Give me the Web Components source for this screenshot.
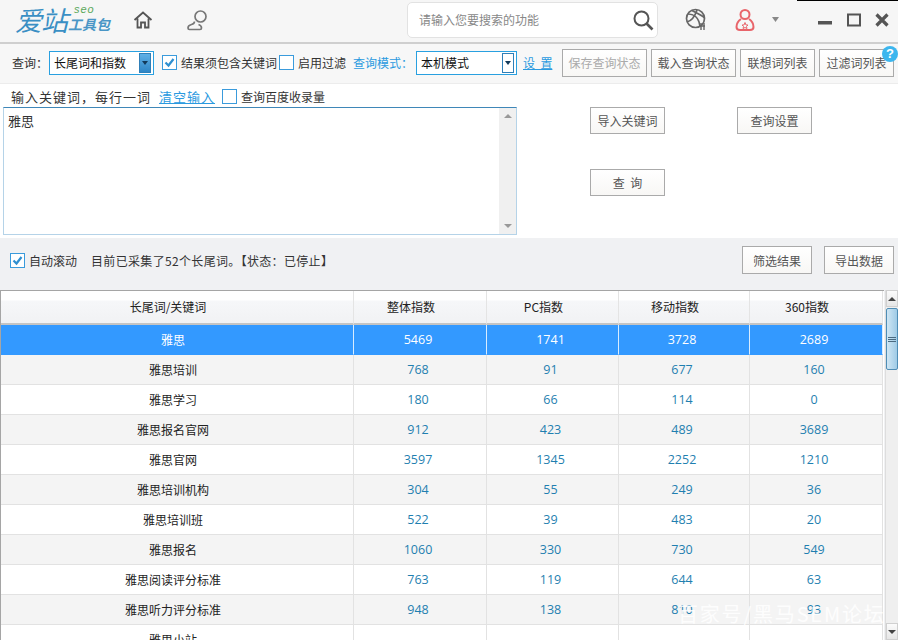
<!DOCTYPE html>
<html lang="zh">
<head>
<meta charset="utf-8">
<title>爱站工具包</title>
<style>
  html, body { margin: 0; height: 640px; overflow: hidden; background: #fff; }
  body { font: 12px "Noto Sans CJK SC", "Liberation Sans", sans-serif; color: #333; }
</style>
</head>
<body>
<az-app></az-app>
<script>
const SANS = '"Noto Sans CJK SC", "Liberation Sans", sans-serif';

class AzButton extends HTMLElement {
    constructor() {
        super();
        this.attachShadow({mode: 'open'}).innerHTML = `
            <style>
                :host {
                    display: flex; align-items: center; justify-content: center;
                    box-sizing: border-box; height: 28px; flex: none;
                    border: 1px solid #aaa; font-size: 12px; color: #555;
                    background: linear-gradient(#fff, #f8f7f5); white-space: nowrap;
                }
                :host([disabled]) { color: #aaa; }
            </style>
            <slot></slot>`;
    }
}
customElements.define('az-button', AzButton);

class AzCheck extends HTMLElement {
    constructor() {
        super();
        const on = this.hasAttribute('checked');
        this.attachShadow({mode: 'open'}).innerHTML = `
            <style>
                :host { display: flex; align-items: center; gap: 4px; flex: none; white-space: nowrap; }
                .box { box-sizing: border-box; width: 15px; height: 15px; border: 1px solid #3a9bdc; background: #fff; display: flex; }
                svg { width: 13px; height: 13px; }
            </style>
            <span class="box">${on ? '<svg viewBox="0 0 13 13"><path d="M2.5 6.5 5.5 9.5 10.5 3" fill="none" stroke="#2f8fd0" stroke-width="2.2"/></svg>' : ''}</span>
            <slot></slot>`;
    }
}
customElements.define('az-check', AzCheck);

class AzSelect extends HTMLElement {
    constructor() {
        super();
        const strong = this.hasAttribute('strong');
        this.attachShadow({mode: 'open'}).innerHTML = `
            <style>
                :host {
                    display: flex; align-items: center; justify-content: space-between;
                    box-sizing: border-box; height: 24px; flex: none; padding: 0 2px 0 4px;
                    border: 1px solid #29a0e0; background: #fff; color: #111; font-size: 12px;
                }
                .arrow {
                    box-sizing: border-box; width: 12px; height: 20px;
                    display: flex; align-items: center; justify-content: center;
                    border: 1px solid #2f7fb8;
                    background: ${strong ? 'linear-gradient(#5fb0e6, #2f86c6)' : '#fff'};
                }
                .arrow i { width: 0; height: 0; border: 3px solid transparent; border-top: 4px solid #123a5a; border-bottom: 0; }
            </style>
            <slot></slot><span class="arrow"><i></i></span>`;
    }
}
customElements.define('az-select', AzSelect);

class AzTitlebar extends HTMLElement {
    constructor() {
        super();
        this.attachShadow({mode: 'open'}).innerHTML = `
            <style>
                :host {
                    display: flex; align-items: center; box-sizing: border-box; height: 44px; padding-bottom: 3px;
                    background: #f6f6f6; border-bottom: 2px solid #cfcfcf; position: relative;
                }
                .sliver { position: absolute; right: 0; top: 0; width: 101px; height: 1px; background: #000; }
                .logo { box-sizing: border-box; width: 125px; flex: none; padding-left: 15px; display: flex; align-items: center; height: 36px; }
                .big { font: italic 27px/34px ${SANS}; color: #3a8fc4; letter-spacing: -1px; }
                .sub { display: flex; flex-direction: column; margin: -3px 0 0 1px; }
                .seo { font: italic 11px/11px "Liberation Sans", sans-serif; color: #5aa85a; margin: 0 0 1px 6px; letter-spacing: 1px; }
                .tool { font: italic bold 14px/16px ${SANS}; color: #4a96c6; white-space: nowrap; }
                svg { display: block; flex: none; }
                .search {
                    box-sizing: border-box; width: 251px; height: 36px; margin-left: 199px;
                    display: flex; align-items: center; justify-content: space-between; padding: 0 3px 0 11px;
                    background: #fff; border: 1px solid #e2e2e2; border-radius: 5px; color: #888; font-size: 12px;
                }
            </style>
            <span class="sliver"></span>
            <div class="logo">
                <span class="big">爱站</span>
                <span class="sub"><span class="seo">seo</span><span class="tool">工具包</span></span>
            </div>
            <svg style="margin-left:8px" width="20" height="20" viewBox="0 0 20 20" fill="none" stroke="#555" stroke-width="1.8"><path d="M1.5 10 10 2.5 18.500 10M4.500 8.500V17.500H8V12.500H12V17.500H15.500V8.500"/></svg>
            <svg style="margin-left:33px" width="22" height="22" viewBox="0 0 22 22" fill="none" stroke="#777" stroke-width="1.7"><circle cx="14.500" cy="7.500" r="5.500"/><path d="M8.500 12.500C8.500 14 7.500 15 5.500 15.500 3.500 16 2 17 2 19 2 20 2.500 20.500 3.500 20.500H14C15 20.500 15.500 20 15.500 19 15.500 17 14 16 12.500 15.500"/></svg>
            <div class="search"><span>请输入您要搜索的功能</span>
                <svg width="22" height="22" viewBox="0 0 22 22" fill="none" stroke="#555" stroke-width="2"><circle cx="9.500" cy="9.500" r="7"/><path d="M14.500 14.500 20.500 20.500" stroke-width="2.600"/></svg>
            </div>
            <svg style="margin-left:27px" width="22" height="24" viewBox="0 0 22 24" fill="none" stroke="#666" stroke-width="1.700"><circle cx="10.500" cy="10.500" r="9"/><path d="M3 6C8 6 14 9 15 19M12 2C10 8 6 13 2 14M7 2.500C11 5 17 7 19.500 10"/><path d="M16 15V22M19 15V22M15 18H20" stroke-width="1.400"/></svg>
            <svg style="margin-left:28px" width="20" height="24" viewBox="0 0 20 24" fill="none" stroke="#e8646a" stroke-width="2"><circle cx="10" cy="6.500" r="4.500"/><path d="M6 11C3 13 1.500 16 1.500 19 1.500 21 3 22 5 22H15C17 22 18.500 21 18.500 19 18.500 16 17 13 14 11"/><path d="M10 14.500 11 17H13L11.500 18.500 12 20.500 10 19.500 8 20.500 8.500 18.500 7 17H9Z" stroke-width="1"/></svg>
            <svg style="margin-left:17px" width="7" height="5" viewBox="0 0 7 5"><path d="M0 0H7L3.500 5Z" fill="#888"/></svg>
            <svg style="margin-left:39px" width="14" height="14" viewBox="0 0 14 14"><rect y="8" width="14" height="3.500" fill="#555"/></svg>
            <svg style="margin-left:15px" width="14" height="14" viewBox="0 0 14 14" fill="none" stroke="#555" stroke-width="2"><rect x="1" y="1.500" width="12" height="11"/></svg>
            <svg style="margin-left:14px" width="14" height="14" viewBox="0 0 14 14" fill="none" stroke="#555" stroke-width="3.200"><path d="M1.500 1.500 12.500 12.500M12.500 1.500 1.500 12.500"/></svg>`;
    }
}
customElements.define('az-titlebar', AzTitlebar);

class AzToolbar extends HTMLElement {
    constructor() {
        super();
        this.attachShadow({mode: 'open'}).innerHTML = `
            <style>
                :host {
                    display: flex; align-items: center; box-sizing: border-box; height: 40px;
                    padding: 0 0 2px 12px; background: #f7f7f7; border-bottom: 1px solid #ececec;
                    position: relative; font-size: 12px; white-space: nowrap;
                }
                .blue { color: #2a9ae0; }
                .link { color: #2a9ae0; text-decoration: underline; }
                .help {
                    position: absolute; right: 0; top: 2px; width: 16px; height: 16px; border-radius: 50%;
                    background: #3cb6ee; color: #fff; font: bold 13px/16px "Liberation Sans", sans-serif; text-align: center;
                }
            </style>
            <span style="width:37px">查询：</span>
            <az-select strong style="width:105px">长尾词和指数</az-select>
            <az-check checked style="margin-left:8px;width:115px">结果须包含关键词</az-check>
            <az-check style="margin-left:2px;width:69px">启用过滤</az-check>
            <span class="blue" style="margin-left:5px;width:63px">查询模式：</span>
            <az-select style="width:101px">本机模式</az-select>
            <span class="link" style="margin-left:6px;width:39px">设&nbsp;&nbsp;置</span>
            <az-button disabled style="width:85px">保存查询状态</az-button>
            <az-button style="margin-left:4px;width:85px">载入查询状态</az-button>
            <az-button style="margin-left:4px;width:75px">联想词列表</az-button>
            <az-button style="margin-left:4px;width:75px">过滤词列表</az-button>
            <span class="help">?</span>`;
    }
}
customElements.define('az-toolbar', AzToolbar);

class AzInputPanel extends HTMLElement {
    constructor() {
        super();
        this.attachShadow({mode: 'open'}).innerHTML = `
            <style>
                :host {
                    display: grid; box-sizing: border-box; height: 154px; background: #fff;
                    grid-template-columns: 514px 73px 75px 72px 75px; grid-template-rows: 23px 1fr;
                    font-size: 12px; padding-left: 3px;
                }
                .head { grid-column: 1 / -1; display: flex; align-items: center; padding: 2px 0 0 8px; white-space: nowrap; }
                .wide { font-size: 13px; letter-spacing: 1px; }
                .link { color: #2a9ae0; text-decoration: underline; margin-left: 8px; width: 63px; }
                .area {
                    grid-column: 1; grid-row: 2; box-sizing: border-box; width: 514px; height: 128px;
                    border: 1px solid #b5d3e8; border-top-color: #3f87b8; display: flex; justify-content: space-between;
                }
                .text { padding: 3px 4px; font-size: 13px; color: #333; }
                .bar { width: 17px; background: #f0f0f0; display: flex; flex-direction: column; justify-content: space-between; align-items: center; padding: 6px 0; }
                .up, .down { width: 0; height: 0; border: 4px solid transparent; }
                .up { border-bottom: 4px solid #999; border-top: 0; }
                .down { border-top: 4px solid #999; border-bottom: 0; }
                .buttons { grid-column: 3 / -1; grid-row: 2; display: grid; grid-template-columns: 75px 72px 75px; grid-template-rows: 27px 35px 27px; }
                az-button { height: 27px; }
            </style>
            <div class="head">
                <span class="wide">输入关键词，每行一词</span>
                <span class="link wide">清空输入</span>
                <az-check>查询百度收录量</az-check>
            </div>
            <div class="area"><div class="text">雅思</div><div class="bar"><span class="up"></span><span class="down"></span></div></div>
            <div class="buttons">
                <az-button style="grid-column:1;grid-row:1">导入关键词</az-button>
                <az-button style="grid-column:3;grid-row:1">查询设置</az-button>
                <az-button style="grid-column:1;grid-row:3">查&nbsp;&nbsp;询</az-button>
            </div>`;
    }
}
customElements.define('az-input-panel', AzInputPanel);

class AzStatus extends HTMLElement {
    constructor() {
        super();
        this.attachShadow({mode: 'open'}).innerHTML = `
            <style>
                :host {
                    display: flex; align-items: center; box-sizing: border-box; height: 52px;
                    padding: 0 4px 8px 10px; background: #f0f1f3; font-size: 12px; white-space: nowrap;
                }
                .msg { margin-left: 14px; letter-spacing: .33px; }
                .gap { flex: 1; }
                az-button { height: 28px; }
            </style>
            <az-check checked>自动滚动</az-check>
            <span class="msg">目前已采集了52个长尾词。【状态：已停止】</span>
            <span class="gap"></span>
            <az-button style="width:70px">筛选结果</az-button>
            <az-button style="width:70px;margin-left:12px">导出数据</az-button>`;
    }
}
customElements.define('az-status', AzStatus);

const ROWS = [
    ['雅思', 5469, 1741, 3728, 2689],
    ['雅思培训', 768, 91, 677, 160],
    ['雅思学习', 180, 66, 114, 0],
    ['雅思报名官网', 912, 423, 489, 3689],
    ['雅思官网', 3597, 1345, 2252, 1210],
    ['雅思培训机构', 304, 55, 249, 36],
    ['雅思培训班', 522, 39, 483, 20],
    ['雅思报名', 1060, 330, 730, 549],
    ['雅思阅读评分标准', 763, 119, 644, 63],
    ['雅思听力评分标准', 948, 138, 810, 93],
    ['雅思小站', '', '', '', '']
];

class AzTable extends HTMLElement {
    constructor() {
        super();
        const cols = ['长尾词/关键词', '整体指数', 'PC指数', '移动指数', '360指数'];
        const head = cols.map(c => `<div class="th">${c}</div>`).join('');
        const body = ROWS.map((r, i) => {
            const cls = i === 0 ? 'sel' : (i % 2 ? 'alt' : '');
            return r.map((v, j) => `<div class="td ${cls} ${j ? 'num' : ''}">${v}</div>`).join('');
        }).join('');
        this.attachShadow({mode: 'open'}).innerHTML = `
            <style>
                :host { display: flex; height: 350px; background: #f0f1f3; position: relative; overflow: hidden; }
                .grid {
                    box-sizing: border-box; width: 884px; height: 350px; overflow: hidden; flex: none; align-content: start;
                    display: grid; grid-template-columns: 353px 133px 132px 131px 133px;
                    grid-template-rows: 34px; grid-auto-rows: 30px;
                    border-top: 1px solid #a5a5a5; border-left: 1px solid #a5a5a5; background: #fff;
                }
                .th {
                    display: flex; align-items: center; justify-content: center; color: #222; font-size: 12px;
                    box-sizing: border-box; padding: 0 18px 1px 0;
                    background: linear-gradient(#fff 0, #fff 9px, #f6f7f9 10px, #f1f2f4 100%);
                    border-right: 1px solid #e4e4e4; border-bottom: 2px solid #c4c4c4;
                }
                .td {
                    display: flex; align-items: center; justify-content: center; box-sizing: border-box; background: #fff;
                    border-right: 1px solid #e2e2e2; border-bottom: 1px solid #e2e2e2; font-size: 12px; color: #222;
                    padding: 0 8px 1px 0;
                }
                .num { color: #1f7fb0; font: 12.500px "Open Sans", "Liberation Sans", sans-serif; padding: 0 4px 1px 0; }
                .alt { background: #f4f4f4; }
                .sel { background: #3399ff; color: #fff; border-bottom-color: #3399ff; border-right-color: #d8ecff; }
                .scroll {
                    flex: 1; margin-left: 1px; background: #efefef; border-left: 1px solid #ddd;
                    display: flex; flex-direction: column; justify-content: space-between;
                }
                .thumbwrap { flex: 1; }
                .end { height: 17px; background: linear-gradient(#fbfbfb, #e6e6e6); border: 1px solid #d0d0d0; box-sizing: border-box; display: flex; align-items: center; justify-content: center; }
                .end i { width: 0; height: 0; border: 4px solid transparent; }
                .up i { border-bottom: 4px solid #444; border-top: 0; }
                .down i { border-top: 4px solid #444; border-bottom: 0; }
                .thumb {
                    box-sizing: border-box; height: 62px; margin-top: 1px; border: 1px solid #4f8db5; border-radius: 2px;
                    background: linear-gradient(90deg, #cfe6f4, #9fcbe6);
                    display: flex; flex-direction: column; justify-content: center; align-items: center; gap: 1px;
                }
                .thumb b { width: 8px; height: 1px; background: #4a6a80; }
                .mark {
                    position: absolute; left: 678px; top: 312px; color: rgba(255,255,255,.88);
                    font: 20px/24px ${SANS}; letter-spacing: 1.800px; white-space: nowrap;
                }
            </style>
            <div class="grid">${head}${body}</div>
            <div class="scroll">
                <div class="end up"><i></i></div>
                <div class="thumbwrap"><div class="thumb"><b></b><b></b><b></b></div></div>
                <div class="end down"><i></i></div>
            </div>
            <span class="mark">百家号/黑马SEM论坛</span>`;
    }
}
customElements.define('az-table', AzTable);

class AzApp extends HTMLElement {
    constructor() {
        super();
        this.attachShadow({mode: 'open'}).innerHTML = `
            <style>:host { display: block; width: 898px; height: 640px; overflow: hidden; }</style>
            <az-titlebar></az-titlebar>
            <az-toolbar></az-toolbar>
            <az-input-panel></az-input-panel>
            <az-status></az-status>
            <az-table></az-table>`;
    }
}
customElements.define('az-app', AzApp);
</script>
</body>
</html>
